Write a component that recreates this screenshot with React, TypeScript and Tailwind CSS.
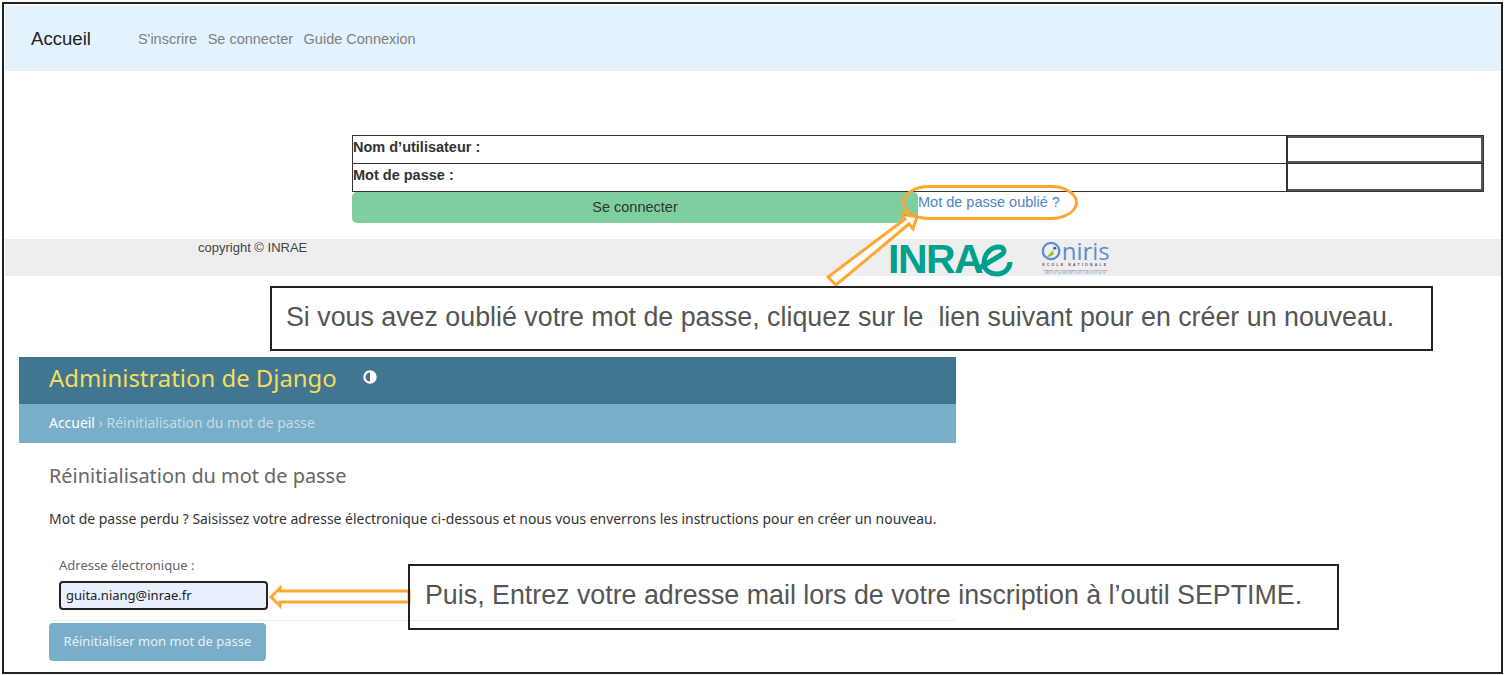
import React from "react";

const NavBar = () => (
  <nav className="flex h-[65px] items-center bg-[#e3f2fd] pl-[26px]">
    <a className="mr-[47px] text-[18.6px] text-[#222]">Accueil</a>
    <div className="flex gap-[10.5px] pt-[2px] text-[14.5px] text-[#808080]">
      <a>S'inscrire</a>
      <a>Se connecter</a>
      <a>Guide Connexion</a>
    </div>
  </nav>
);

const LoginRow = ({ label, last }: { label: string; last?: boolean }) => (
  <div className={`flex ${last ? "h-[27px]" : "h-[28px] border-b border-[#333]"}`}>
    <div className="flex-1 border-r-2 border-[#333] pt-[1px] text-[14.5px] font-bold text-[#333]">
      {label}
    </div>
    <div className={`w-[195px] border-r-2 border-[#555] ${last ? "border-b-2" : "border-t-2 border-b-2"}`} />
  </div>
);

const LoginForm = () => (
  <div className="mt-[64px] ml-[347px] w-[1132px]">
    <div className="border border-b-0 border-[#333]">
      <LoginRow label="Nom d’utilisateur :" />
      <LoginRow label="Mot de passe :" last />
    </div>
    <div className="flex border-t border-[#333]">
      <button className="h-[31px] w-[566px] rounded-[5px] bg-[#7dcfa0] text-[14.5px] text-[#333]">
        Se connecter
      </button>
      <a className="text-[14.5px] leading-[20px] text-[#4a86c8]">Mot de passe oublié ?</a>
    </div>
  </div>
);

const InraeLogo = () => (
  <div className="flex items-center text-[#00a08f]">
    <span className="text-[41px] leading-none font-bold tracking-[-1.5px]">INRA</span>
    <svg width="40" height="34" viewBox="0 0 40 34" className="-ml-[9px] mt-[1px]">
      <path
        d="M3 27 L28 12 C33 9 31 4 26 4 C17 4 11 12 11 20 C11 28 18 31 24 31 C32 31 37 25 37 19"
        fill="none"
        stroke="currentColor"
        strokeWidth="5"
      />
    </svg>
  </div>
);

const OnirisLogo = () => (
  <div className="flex w-[70px] flex-col items-center">
    <div className="flex h-[24px] items-center">
      <svg width="21" height="24" viewBox="0 0 23 24">
        <circle cx="11" cy="12" r="9" fill="none" stroke="#5b8fd0" strokeWidth="2.5" />
        <path d="M5 20 L13 11 L14 16 Z" fill="#9cc23c" />
        <circle cx="15" cy="9" r="1.6" fill="#2f5fa8" />
      </svg>
      <span className="font-['Open_Sans',sans-serif] text-[24px] leading-none text-[#5b8fd0]">niris</span>
    </div>
    <span className="text-[3.5px] leading-[5px] font-bold tracking-[2.2px] whitespace-nowrap text-[#555]">
      ECOLE NATIONALE
    </span>
    <span className="text-[2.3px] leading-[4px] whitespace-nowrap text-[#666]">
      VETERINAIRE, AGROALIMENTAIRE ET DE L'ALIMENTATION
    </span>
    <span className="text-[2.7px] leading-[4px] whitespace-nowrap text-[#7f9fd0]">
      SANTE ET ALIMENTATION AU COEUR DE LA VIE
    </span>
  </div>
);

const SiteFooter = () => (
  <footer className="mt-[16px] flex h-[37px] bg-[#eeeeee]">
    <span className="mt-[1px] ml-[193px] w-[110px] text-[13px] leading-[16px] whitespace-nowrap text-[#444]">
      copyright © INRAE
    </span>
    <div className="ml-[580px] flex items-start gap-[27px]">
      <InraeLogo />
      <OnirisLogo />
    </div>
  </footer>
);

const DjangoPanel = () => (
  <section className="mt-[81px] ml-[14px] w-[937px] font-['Noto_Sans',sans-serif]">
    <header className="flex h-[47px] items-start bg-[#417690] pt-[4px] pl-[30px]">
      <h1 className="text-[23.9px] leading-[34px] text-[#f5dd5d]">Administration de Django</h1>
      <svg width="14" height="14" viewBox="0 0 14 14" className="mt-[9px] ml-[26px]">
        <circle cx="7" cy="7" r="6" fill="#fff" stroke="#fff" strokeWidth="1.5" />
        <path d="M7 2.5 A4.5 4.5 0 0 0 7 11.5 Z" fill="#417690" />
      </svg>
    </header>
    <div className="flex h-[39px] items-center bg-[#79aec8] pl-[30px] text-[13.95px] text-[#c4dce8]">
      <a className="text-white">Accueil</a>
      <span>&nbsp;› Réinitialisation du mot de passe</span>
    </div>
    <div className="pl-[30px]">
      <h2 className="mt-[19px] text-[19.9px] leading-[27px] text-[#666]">Réinitialisation du mot de passe</h2>
      <p className="mt-[20px] text-[13.95px] leading-[20px] text-[#333]">
        Mot de passe perdu ? Saisissez votre adresse électronique ci-dessous et nous vous enverrons les
        instructions pour en créer un nouveau.
      </p>
      <div className="mt-[27px] pl-[10px]">
        <label className="block text-[13px] leading-[18px] text-[#666]">Adresse électronique :</label>
        <div className="mt-[7px] flex h-[29px] w-[209px] items-center rounded-[4px] border-2 border-[#222] bg-[#e8f0fe] pl-[5px] text-[13px] text-[#222]">
          guita.niang@inrae.fr
        </div>
      </div>
      <div className="mt-[10px] border-t border-[#eeeeee]" />
      <button className="mt-[2px] h-[38px] w-[217px] rounded-[4px] bg-[#79aec8] text-[13px] text-[#e6f1f6]">
        Réinitialiser mon mot de passe
      </button>
    </div>
  </section>
);

// annotations drawn over the screenshots
const Annotations = () => (
  <>
    <div className="absolute top-[185px] left-[902px] h-[35px] w-[176px] rounded-[28px/18px] border-[3px] border-[#ffa733]" />
    <svg className="absolute top-0 left-0" width="1506" height="675" viewBox="0 0 1506 675" fill="none">
      <path
        d="M828 277 L905 219 L902 214 L917 217 L913 229 L909 224 L836 285 Z"
        fill="#fff"
        stroke="#ffa733"
        strokeWidth="3"
      />
      <path
        d="M271 597 L280 588 L280 591 L409 591 L409 602 L280 602 L280 606 Z"
        fill="#fff"
        stroke="#ffa733"
        strokeWidth="3"
      />
    </svg>
    <div className="absolute top-[286px] left-[270px] flex h-[65px] w-[1163px] items-center border-2 border-[#222] bg-white pb-[2px] pl-[14px] text-[26.8px] whitespace-pre text-[#555]">
      Si vous avez oublié votre mot de passe, cliquez sur le  lien suivant pour en créer un nouveau.
    </div>
    <div className="absolute top-[564px] left-[408px] flex h-[66px] w-[931px] items-center border-2 border-[#222] pb-[4px] pl-[15px] text-[26.8px] text-[#555]">
      Puis, Entrez votre adresse mail lors de votre inscription à l’outil SEPTIME.
    </div>
  </>
);

export default function App() {
  return (
    <div className="relative h-[675px] w-[1506px] overflow-hidden bg-white font-['Liberation_Sans',sans-serif]">
      <div className="mx-[2px] mt-[2px] h-[672px] w-[1501px] border-2 border-[#222] pt-[2px] pl-px">
        <NavBar />
        <LoginForm />
        <SiteFooter />
        <DjangoPanel />
      </div>
      <Annotations />
    </div>
  );
}
